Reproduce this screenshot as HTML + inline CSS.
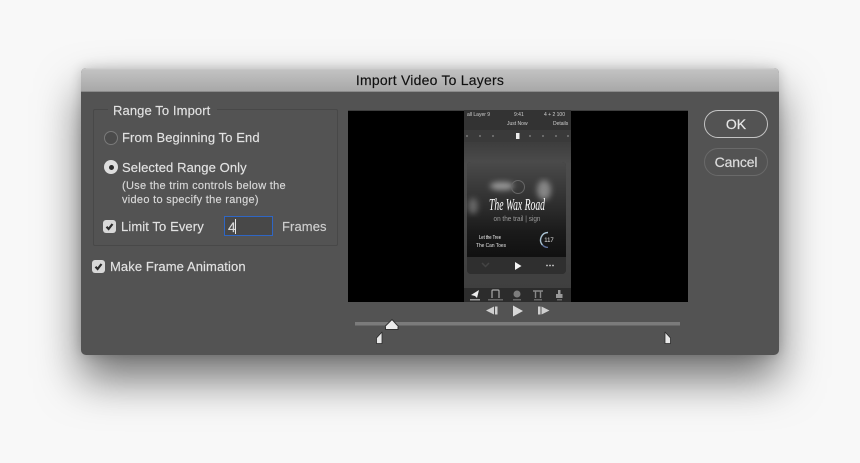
<!DOCTYPE html>
<html><head><meta charset="utf-8">
<style>
html,body{margin:0;padding:0;width:860px;height:463px;overflow:hidden;background:#f8f8f8}
*{box-sizing:border-box}
body{position:relative;font-family:"Liberation Sans",Arial,sans-serif}
.a{position:absolute}
.t{position:absolute;white-space:nowrap;color:#e2e2e2;font-size:13px;letter-spacing:.1px;line-height:16px;-webkit-text-stroke:.15px currentColor}
#dlg{left:81px;top:68px;width:698px;height:287px;background:#535353;border-radius:5px;box-shadow:0 24px 44px rgba(0,0,0,.55),0 0 12px rgba(0,0,0,.18)}
#bar{left:81px;top:68px;width:698px;height:24px;border-radius:5px 5px 0 0;background:linear-gradient(#d4d4d4 0,#c2c2c2 2px,#a8a8a8 100%);border-bottom:1px solid #8b8b8b}
.cb{position:absolute;width:13px;height:13px;background:#d8d8d8;border-radius:3px}
.cb svg{position:absolute;left:0;top:0}
.btn{position:absolute;border-radius:14px;text-align:center;font-size:14px;color:#e6e6e6;-webkit-text-stroke:.2px currentColor}
</style></head><body>
<div class="a" id="dlg"></div>
<div class="a" id="bar"></div>
<div class="t" style="left:0;width:860px;top:72px;text-align:center;color:#111;font-size:14px;letter-spacing:.22px">Import Video To Layers</div>

<div class="a" style="left:93px;top:109px;width:245px;height:137px;border:1px solid #484848;border-radius:2px"></div>
<div class="a" style="left:108px;top:105px;width:109px;height:10px;background:#535353"></div>
<div class="t" style="left:113px;top:103px">Range To Import</div>

<div class="a" style="left:104px;top:131px;width:14px;height:14px;border-radius:50%;background:#4b4b4b;border:1px solid #7a7a7a"></div>
<div class="t" style="left:122px;top:130px">From Beginning To End</div>

<div class="a" style="left:104px;top:160px;width:14px;height:14px;border-radius:50%;background:#dedede"></div>
<div class="a" style="left:108.500px;top:164.500px;width:5px;height:5px;border-radius:50%;background:#2b2b2b"></div>
<div class="t" style="left:122px;top:160px">Selected Range Only</div>
<div class="t" style="left:122px;top:179px;font-size:11px;line-height:14px;letter-spacing:.29px;color:#d8d8d8">(Use the trim controls below the<br>video to specify the range)</div>

<div class="cb" style="left:103px;top:220px"><svg width="13" height="13" viewBox="0 0 13 13"><path d="M3.500 6.800L5.600 9L9.500 4" fill="none" stroke="#2a2a2a" stroke-width="2.200"/></svg></div>
<div class="t" style="left:121px;top:219px">Limit To Every</div>
<div class="a" style="left:224px;top:216px;width:49px;height:20px;background:#484848;border:1px solid #2f66c4"></div>
<div class="t" style="left:228px;top:219px;color:#d8d8d8;font-size:14px">4</div>
<div class="a" style="left:235px;top:219px;width:1px;height:15px;background:#e8e8e8"></div>
<div class="t" style="left:282px;top:219px;color:#cfcfcf">Frames</div>

<div class="cb" style="left:92px;top:260px"><svg width="13" height="13" viewBox="0 0 13 13"><path d="M3.500 6.800L5.600 9L9.500 4" fill="none" stroke="#2a2a2a" stroke-width="2.200"/></svg></div>
<div class="t" style="left:110px;top:259px">Make Frame Animation</div>

<!-- video -->
<div class="a" style="left:348px;top:110px;width:340px;height:192px;background:#000;border-top:1px solid #3e3e3e;overflow:hidden"></div>
<svg class="a" style="left:464px;top:110px" width="107" height="192" viewBox="0 0 107 192">
<defs>
<linearGradient id="c" x1="0" y1="0" x2="0" y2="1"><stop offset="0" stop-color="#4a4a4a"/><stop offset=".42" stop-color="#303030"/><stop offset=".75" stop-color="#1a1a1a"/><stop offset="1" stop-color="#111"/></linearGradient>
<linearGradient id="bg" x1="0" y1="0" x2="0" y2="1"><stop offset="0" stop-color="#3d3d3d"/><stop offset=".15" stop-color="#4c4c4c"/><stop offset="1" stop-color="#3f3f3f"/></linearGradient>
<filter id="b1"><feGaussianBlur stdDeviation="3"/></filter>
<filter id="b3"><feGaussianBlur stdDeviation=".3"/></filter>
</defs>
<rect y="0" width="107" height="20" fill="#333"/>
<rect y="20" width="107" height="12" fill="#3a3a3a"/>
<rect y="32" width="107" height="146" fill="url(#bg)"/>
<rect y="178" width="107" height="14" fill="#2c2c2c"/>
<g font-family="Liberation Sans,sans-serif" font-size="5" fill="#cfcfcf" filter="url(#b3)">
<text x="3" y="6">all Layer 9</text><text x="50" y="6">9:41</text><text x="80" y="6">4 + 2 100</text>
<text x="43" y="15">Just Now</text><text x="89" y="15">Details</text>
</g>
<g filter="url(#b3)" fill="#8a8a8a"><circle cx="3" cy="26" r=".9"/><circle cx="16" cy="26" r=".9"/><circle cx="29" cy="26" r=".9"/><circle cx="66" cy="26" r=".9"/><circle cx="79" cy="26" r=".9"/><circle cx="92" cy="26" r=".9"/><circle cx="104" cy="26" r=".9"/><rect x="52" y="23" width="3.500" height="6" fill="#eee"/></g>
<rect x="3" y="52" width="99" height="112" rx="4" fill="#2e2e2e"/>
<path d="M3 56a4 4 0 0 1 4-4h91a4 4 0 0 1 4 4v90H3z" fill="url(#c)"/>
<g filter="url(#b1)"><ellipse cx="38" cy="76" rx="12" ry="4" fill="#999"/><ellipse cx="80" cy="80" rx="7" ry="10" fill="#858585"/><ellipse cx="9" cy="96" rx="5" ry="8" fill="#666"/></g>
<circle cx="54" cy="77" r="6.500" fill="none" stroke="#666" stroke-width="1" filter="url(#b3)"/>
<text x="53" y="100" text-anchor="middle" font-family="Liberation Serif,serif" font-style="italic" font-size="17" fill="#fff" filter="url(#b3)" textLength="56" lengthAdjust="spacingAndGlyphs">The Wax Road</text>
<text x="53" y="111" text-anchor="middle" font-family="Liberation Sans,sans-serif" font-size="7" fill="#9a9a9a" filter="url(#b3)" textLength="47" lengthAdjust="spacingAndGlyphs">on the trail | sign</text>
<text x="15" y="129" font-family="Liberation Sans,sans-serif" font-size="5.500" fill="#fff" filter="url(#b3)" textLength="22" lengthAdjust="spacingAndGlyphs">Let the Tree</text>
<text x="12" y="137" font-family="Liberation Sans,sans-serif" font-size="5.500" fill="#e4e4e4" filter="url(#b3)" textLength="30" lengthAdjust="spacingAndGlyphs">The Can Toes</text>
<path d="M84 122.500A7.500 7.500 0 0 0 78.500 135" fill="none" stroke="#a9c2d2" stroke-width="1.400" filter="url(#b3)"/>
<path d="M78.500 135A7.500 7.500 0 0 0 84 137.500" fill="none" stroke="#5d6f9a" stroke-width="1.400" filter="url(#b3)"/>
<text x="85" y="132" text-anchor="middle" font-family="Liberation Sans,sans-serif" font-size="6" fill="#e6e6e6" filter="url(#b3)">117</text>
<rect x="3" y="144" width="99" height="3" fill="#111"/>
<path d="M3 147h99v13a4 4 0 0 1-4 4H7a4 4 0 0 1-4-4z" fill="#2f2f2f"/>
<path d="M51 152l6.500 4-6.500 4z" fill="#f4f4f4" filter="url(#b3)"/>
<g fill="#ccc" filter="url(#b3)"><circle cx="83" cy="155.500" r=".9"/><circle cx="86" cy="155.500" r=".9"/><circle cx="89" cy="155.500" r=".9"/></g>
<path d="M18 153l3.500 3.500 3.500-3.500" fill="none" stroke="#444" stroke-width="1.500"/>
<g filter="url(#b3)">
<path d="M7 185l8-5-2 8-2-2z" fill="#eee"/>
<path d="M28 188v-7a1 1 0 0 1 1-1h5a1 1 0 0 1 1 1v7" fill="none" stroke="#aaa" stroke-width="1.200"/>
<circle cx="53" cy="184" r="3.500" fill="#7c7c7c"/>
<path d="M69 181h10M71.500 181v7M76.500 181v7" stroke="#888" stroke-width="1.400"/>
<path d="M94 180h2.500v4h2v4h-6.500v-4h2z" fill="#999"/>
</g>
<g filter="url(#b3)" fill="#666"><rect x="6" y="189" width="10" height="1.500" fill="#999"/><rect x="24" y="189" width="15" height="1.500"/><rect x="49" y="189" width="8" height="1.500"/><rect x="70" y="189" width="8" height="1.500"/><rect x="93" y="189" width="5" height="1.500"/></g>
</svg>

<!-- transport -->
<svg class="a" style="left:345px;top:295px" width="345" height="60" viewBox="0 0 345 60">
<g fill="#cfcfcf">
<path d="M141 15.500l8-4v8z"/><rect x="150" y="11.500" width="2.500" height="8"/>
<path d="M168 10.500l10 5.500-10 5.500z" fill="#d8d8d8"/>
<rect x="193" y="11.500" width="2.500" height="8"/><path d="M196.500 11.500l8 4-8 4z"/>
</g>
<rect x="10" y="27" width="325" height="3.500" fill="#7b7b7b"/>
<path d="M47 24.500l5 5.500a2 2 0 0 1 1 2.500v2h-12.500v-2a2 2 0 0 1 1-2.500z" fill="#ececec" stroke="#333" stroke-width="1"/>
<path d="M37 37v11.500h-5.500v-5.500z" fill="#e8e8e8" stroke="#2c2c2c" stroke-width=".8" stroke-linejoin="round"/>
<path d="M320 37v11.500h5.500v-5.500z" fill="#e8e8e8" stroke="#2c2c2c" stroke-width=".8" stroke-linejoin="round"/>
</svg>

<!-- buttons -->
<div class="btn" style="left:704px;top:110px;width:64px;height:28px;line-height:26px;border:1px solid #c4c4c4">OK</div>
<div class="btn" style="left:704px;top:148px;width:64px;height:28px;line-height:26px;border:1px solid #6a6a6a;color:#dcdcdc;letter-spacing:-.15px">Cancel</div>
</body></html>
